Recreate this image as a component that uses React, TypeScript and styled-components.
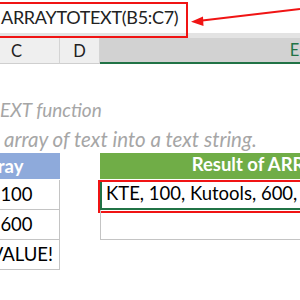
import styled, { createGlobalStyle } from "styled-components";

const GlobalStyle = createGlobalStyle`
  html, body {
    margin: 0;
    padding: 0;
    background: #ffffff;
  }
  body {
    width: 300px;
    height: 300px;
    overflow: hidden;
    font-family: "Lato", "Liberation Sans", sans-serif;
    color: #000000;
  }
`;

const Page = styled.div`
  position: relative;
  width: 300px;
  height: 300px;
  overflow: hidden;
`;

const FormulaBar = styled.div`
  position: relative;
  height: 33px;
  background: #ffffff;
  border-bottom: 5px solid #e3e3e3;
`;

const FormulaText = styled.div`
  padding-left: 1px;
  padding-top: 1px;
  font-size: 18px;
  letter-spacing: -0.3px;
  line-height: 33px;
  color: #222222;
  white-space: nowrap;
`;

const Outline = styled.div`
  position: absolute;
  left: -4px;
  top: 2px;
  width: 192px;
  height: 36px;
  box-sizing: border-box;
  border: 2px solid #f01414;
`;

const Pointer = styled.svg`
  position: absolute;
  left: 0;
  top: 0;
`;

const Grid = styled.div`
  display: grid;
  grid-template-columns: 86px 40px 390px;
  margin-left: -26px;
`;

const ColHead = styled.div<{ $active?: boolean }>`
  height: 26px;
  box-sizing: border-box;
  display: flex;
  align-items: center;
  justify-content: center;
  font-size: 16.5px;
  background: ${(p) => (p.$active ? "#d2d2d2" : "#efefef")};
  color: ${(p) => (p.$active ? "#217346" : "#222222")};
  border-right: 1px solid #d4d4d4;
  border-bottom: ${(p) => (p.$active ? "2px solid #217346" : "1px solid #cfcfcf")};
`;

const Sheet = styled.div`
  display: flex;
  flex-direction: column;
`;

const NoteRow = styled.div<{ $h: number; $indent?: number; $size?: number }>`
  height: ${(p) => p.$h}px;
  box-sizing: border-box;
  display: flex;
  align-items: flex-end;
  padding-left: ${(p) => p.$indent ?? 0}px;
  padding-bottom: 2px;
  font-size: ${(p) => p.$size ?? 20.5}px;
  font-style: italic;
  color: #a6a6a6;
  white-space: nowrap;
`;

const Cell = styled.div<{ $h?: number }>`
  height: ${(p) => p.$h ?? 30}px;
  box-sizing: border-box;
  display: flex;
  align-items: flex-end;
  justify-content: center;
  padding-bottom: 4px;
  font-size: 18.5px;
  white-space: nowrap;
`;

const SourceHead = styled.div`
  height: 27px;
  box-sizing: border-box;
  padding-left: 4px;
  line-height: 26px;
  font-size: 18.5px;
  font-weight: 700;
  white-space: nowrap;
  background: #8eaadb;
  color: #ffffff;
  border-bottom: 1px solid #ffffff;
`;

const ResultHead = styled(Cell)`
  overflow: hidden;
  background: #70ad47;
  color: #ffffff;
  font-weight: 700;
  border-bottom: 1px solid #ffffff;
`;

const SourceCell = styled(Cell)`
  border-right: 1px solid #c4c4c4;
  border-bottom: 1px solid #c4c4c4;
`;

const ResultCell = styled(Cell)<{ $selected?: boolean }>`
  position: relative;
  justify-content: flex-start;
  padding-left: 4px;
  border: ${(p) => (p.$selected ? "2px solid #217346" : "none")};
  border-left: ${(p) => (p.$selected ? "2px solid #217346" : "1px solid #c4c4c4")};
  border-bottom: ${(p) => (p.$selected ? "2px solid #217346" : "1px solid #c4c4c4")};
`;

const CellOutline = styled.div`
  position: absolute;
  left: -4px;
  top: -2px;
  right: -4px;
  bottom: -5px;
  border: 2px solid #f01414;
`;

const Blank = styled.div``;

export default function App() {
  return (
    <Page>
      <GlobalStyle />
      <FormulaBar>
        <FormulaText>ARRAYTOTEXT(B5:C7)</FormulaText>
        <Outline />
      </FormulaBar>
      <Grid>
        <ColHead>C</ColHead>
        <ColHead>D</ColHead>
        <ColHead $active>E</ColHead>
      </Grid>
      <Sheet>
        <NoteRow $h={29} />
        <NoteRow $h={30} $size={19}>EXT function</NoteRow>
        <NoteRow $h={30} $indent={4}>array of text into a text string.</NoteRow>
        <Grid>
          <SourceHead>Array</SourceHead>
          <Blank />
          <ResultHead $h={27}>Result of ARRAYTOTEXT</ResultHead>

          <SourceCell>100</SourceCell>
          <Blank />
          <ResultCell $selected>
            KTE, 100, Kutools, 600, #VALUE!
            <CellOutline />
          </ResultCell>

          <SourceCell>600</SourceCell>
          <Blank />
          <ResultCell>&nbsp;</ResultCell>

          <SourceCell>#VALUE!</SourceCell>
          <Blank />
          <Blank />
        </Grid>
      </Sheet>
      <Pointer width="300" height="40" viewBox="0 0 300 40">
        <line x1="300" y1="9" x2="198" y2="21" stroke="#f01414" strokeWidth="2.2" />
        <polygon points="191,21.8 203,16.5 203.5,26" fill="#f01414" />
      </Pointer>
    </Page>
  );
}
